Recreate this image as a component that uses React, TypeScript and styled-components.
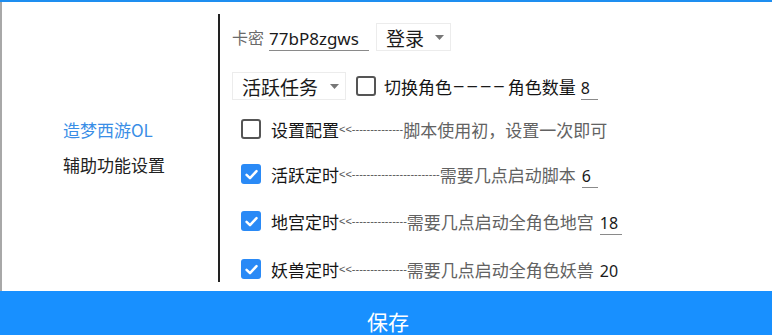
import React, { useState } from 'react';
import styled, { createGlobalStyle } from 'styled-components';

const GlobalStyle = createGlobalStyle`
  html, body {
    margin: 0;
    padding: 0;
    background: #ffffff;
  }
  body {
    font-family: 'Noto Sans CJK SC', 'Noto Sans', sans-serif;
  }
`;

interface TimerRow {
  label: string;
  dashes: number;
  hint: string;
  value: string;
  checked: boolean;
  gap: number;
}

const timerRows: TimerRow[] = [
  { label: '活跃定时', dashes: 24, hint: '需要几点启动脚本', value: '6', checked: true, gap: 17 },
  { label: '地宫定时', dashes: 15, hint: '需要几点启动全角色地宫', value: '18', checked: true, gap: 19 },
  { label: '妖兽定时', dashes: 15, hint: '需要几点启动全角色妖兽', value: '20', checked: true, gap: 20 },
];

const arrowText = (n: number) => '<<' + '-'.repeat(n);

const Check: React.FC<{ checked: boolean; onToggle: () => void }> = ({ checked, onToggle }) => (
  <CheckBox $checked={checked} onClick={onToggle}>
    {checked && (
      <svg width='15' height='15' viewBox='0 0 14 14'>
        <path d='M2.4 7.3 L5.6 10.4 L11.7 3.8' fill='none' stroke='#fff' strokeWidth='2.3' strokeLinecap='round' strokeLinejoin='round' />
      </svg>
    )}
  </CheckBox>
);

const Arrow = () => (
  <svg width='9' height='5' viewBox='0 0 9 5'>
    <path d='M0 0 L9 0 L4.5 5 Z' fill='#777' />
  </svg>
);

const App: React.FC = () => {
  const [config, setConfig] = useState(false);
  const [switchRole, setSwitchRole] = useState(false);
  const [timers, setTimers] = useState(timerRows.map((r) => r.checked));

  const toggleTimer = (i: number) => {
    setTimers((prev) => prev.map((v, idx) => (idx === i ? !v : v)));
  };

  return (
    <>
      <GlobalStyle />
      <Window>
        <Main>
          <Sidebar>
            <NavItem $active>造梦西游OL</NavItem>
            <NavItem>辅助功能设置</NavItem>
          </Sidebar>
          <Content>
            <Row $gap={0}>
              <Label>卡密</Label>
              <LineInput $width={100} $offset={5} $size={17}>77bP8zgws</LineInput>
              <Select $width={75} $offset={1}>
                登录
                <Arrow />
              </Select>
            </Row>
            <Row $gap={21}>
              <Select $width={114} $offset={-6}>
                活跃任务
                <Arrow />
              </Select>
              <Spacer $w={10} />
              <Check checked={switchRole} onToggle={() => setSwitchRole(!switchRole)} />
              <Spacer $w={8} />
              <Text>切换角色</Text>
              <DashText>––––</DashText>
              <Text>角色数量</Text>
              <LineInput $width={17} $offset={5}>8</LineInput>
            </Row>
            <Row $gap={15} $indent={9}>
              <Check checked={config} onToggle={() => setConfig(!config)} />
              <Spacer $w={10} />
              <Text>设置配置</Text>
              <Dashes>{arrowText(14)}</Dashes>
              <Hint>脚本使用初，设置一次即可</Hint>
            </Row>
            {timerRows.map((row, i) => (
              <Row key={row.label} $gap={row.gap} $indent={9}>
                <Check checked={timers[i]} onToggle={() => toggleTimer(i)} />
                <Spacer $w={10} />
                <Text>{row.label}</Text>
                <Dashes>{arrowText(row.dashes)}</Dashes>
                <Hint>{row.hint}</Hint>
                <LineInput $width={row.value.length > 1 ? 22 : 16} $offset={6}>
                  {row.value}
                </LineInput>
              </Row>
            ))}
          </Content>
        </Main>
        <SaveBar>
          <SaveText>保存</SaveText>
        </SaveBar>
      </Window>
    </>
  );
};

const Window = styled.div`
  width: 772px;
  height: 335px;
  display: flex;
  flex-direction: column;
  border-top: 2px solid #1e8ef0;
  box-sizing: border-box;
  overflow: hidden;
`;

const Main = styled.div`
  flex: 1;
  display: flex;
  min-height: 0;
  border-left: 2px solid #a8a8a8;
`;

const Sidebar = styled.div`
  width: 216px;
  flex-shrink: 0;
  display: flex;
  flex-direction: column;
  justify-content: center;
  gap: 10px;
  padding-left: 61px;
  box-sizing: border-box;
`;

const NavItem = styled.div<{ $active?: boolean }>`
  font-size: 17px;
  line-height: 25px;
  color: ${({ $active }) => ($active ? '#3a8ee6' : '#222')};
`;

const Content = styled.div`
  flex: 1;
  margin: 12px 0 9px;
  padding: 9px 0 0 12px;
  border-left: 2px solid #222;
  display: flex;
  flex-direction: column;
  overflow: hidden;
`;

const Row = styled.div<{ $gap: number; $indent?: number }>`
  height: 28px;
  flex-shrink: 0;
  display: flex;
  align-items: center;
  margin-top: ${({ $gap }) => $gap}px;
  padding-left: ${({ $indent }) => $indent ?? 0}px;
  white-space: nowrap;
`;

const Spacer = styled.span<{ $w: number }>`
  display: inline-block;
  width: ${({ $w }) => $w}px;
`;

const Label = styled.span`
  font-size: 16px;
  color: #6a6a6a;
`;

const Text = styled.span`
  font-size: 17px;
  color: #151515;
`;

const DashText = styled.span`
  font-family: 'Liberation Sans', sans-serif;
  font-size: 17px;
  color: #1a1a1a;
  letter-spacing: 4px;
  padding-left: 2px;
`;

const Dashes = styled.span`
  font-family: 'Liberation Sans', sans-serif;
  font-size: 11px;
  color: #555;
`;

const Hint = styled.span`
  font-size: 17px;
  color: #626262;
`;

const LineInput = styled.span<{ $width: number; $offset: number; $size?: number }>`
  display: inline-block;
  width: ${({ $width }) => $width}px;
  margin-left: ${({ $offset }) => $offset}px;
  font-family: 'Noto Sans', sans-serif;
  font-size: ${({ $size }) => $size ?? 16}px;
  color: #1a1a1a;
  line-height: 22px;
  margin-top: 4px;
  border-bottom: 1.5px solid #8a8a8a;
`;

const Select = styled.div<{ $width: number; $offset?: number }>`
  width: ${({ $width }) => $width}px;
  height: 28px;
  margin-left: ${({ $offset }) => ($offset ?? 0) + 6}px;
  box-sizing: border-box;
  border: 1px solid #ececec;
  display: flex;
  align-items: center;
  justify-content: space-between;
  padding: 0 6px 0 9px;
  font-size: 19px;
  color: #1a1a1a;
`;

const CheckBox = styled.span<{ $checked: boolean }>`
  width: 20px;
  height: 20px;
  box-sizing: border-box;
  border-radius: 3px;
  flex-shrink: 0;
  display: inline-flex;
  align-items: center;
  justify-content: center;
  cursor: pointer;
  border: ${({ $checked }) => ($checked ? 'none' : '2px solid #555')};
  background: ${({ $checked }) => ($checked ? '#2a8af6' : '#fff')};
`;

const SaveBar = styled.div`
  height: 44px;
  flex-shrink: 0;
  background: #1890ff;
  display: flex;
  justify-content: center;
  align-items: flex-start;
  padding-top: 16px;
  box-sizing: border-box;
`;

const SaveText = styled.span`
  font-size: 21px;
  line-height: 28px;
  color: #fff;
  margin-left: 4px;
`;

export default App;
